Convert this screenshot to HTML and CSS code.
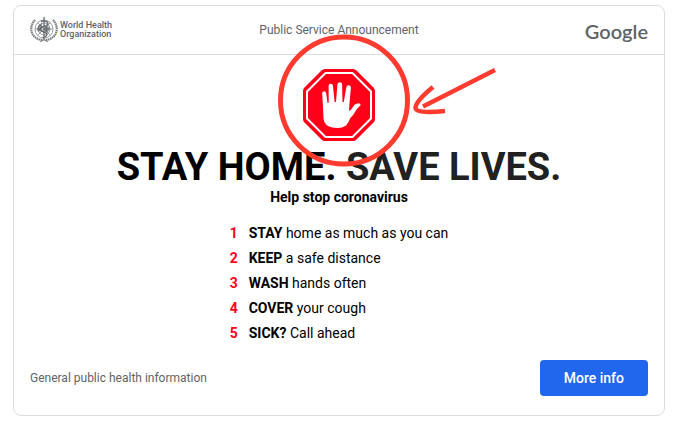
FILE: index.html
```html
<!DOCTYPE html>
<html lang="en">
<head>
<meta charset="utf-8">
<title>Public Service Announcement</title>
<link rel="stylesheet" href="styles.css">
</head>
<body>
<main class="card">
  <header class="header">
    <div class="who">
      <svg class="emblem" viewBox="0 0 28 26" aria-hidden="true">
        <g fill="none" stroke="#5f6368">
          <g stroke-width=".6">
            <circle cx="14" cy="12" r="9"/>
            <circle cx="14" cy="12" r="6"/>
            <circle cx="14" cy="12" r="3"/>
            <path d="M5 12h18M7.600 5.600l12.800 12.800M20.400 5.600L7.600 18.400"/>
          </g>
          <path stroke-width="2.200" stroke-dasharray="1.600 .5" opacity=".8" d="M5 3C0 8 0 16 5 20c2 2 5 3 8 3M23 3c5 5 5 13 0 17-2 2-5 3-8 3"/>
          <path stroke-width="1" opacity=".7" d="M10 25l4-2 4 2"/>
          <path stroke-width="1.200" d="M14 0v23"/>
          <path stroke-width="1.200" d="M11 5c2-2 7-1 7 1.500S10 9.500 10 12.500s7 2 7 5-4 2-4 4"/>
        </g>
        <path fill="#5f6368" opacity=".75" d="M8 9l4-3v5l-3 4-2-2zM15 10l3-1 2 3-3 4-2-2z"/>
      </svg>
      <span class="who-name">World Health<br>Organization</span>
    </div>
    <p class="label">Public Service Announcement</p>
    <span class="google">Google</span>
  </header>

  <section class="content">
    <div class="sign">
      <svg class="stop" viewBox="0 0 72 72" role="img" aria-label="Stop hand">
        <path fill="#ff0018" d="M22 0h28q2 0 3.500 1.500l17 17Q72 20 72 22v28q0 2-1.500 3.500l-17 17Q52 72 50 72H22q-2 0-3.500-1.500l-17-17Q0 52 0 50V22q0-2 1.500-3.500l17-17Q20 0 22 0z"/>
        <path fill="none" stroke="#fff" stroke-width="2" d="M22.500 4h27L68 22.500v27L49.500 68h-27L4 49.500v-27z"/>
        <path fill="#fff" d="M20 38L19.200 24.500q0-2 1.600-2.200 2-.2 2.400 2L24.500 34l1.200-.2L25.600 17q0-2.200 2-2.300 2.200 0 2.400 2.200L31.600 33H33l1.400-17q.2-2.800 2.300-2.800 2.400 0 2.400 2.800L39.500 33h1.300l2.500-14.500q.4-2.500 2.600-2.200 2.200.3 2 2.800L46.500 34 46 42l2.200-1.600 3.300-4.600q1.800-1.500 4.400-1.500 2.300.3 1.600 2-.3.800-1.700 1.600-2.200 1.700-3.500 4.700-2 4-5 6.400-1.800 5-4.300 7.500Q39.500 59 34.500 59q-7 0-11-3-2.700-2-3-6.500z"/>
      </svg>
      <svg class="markup" viewBox="0 0 230 150" aria-hidden="true">
        <g fill="none" stroke="#ff3b30" stroke-width="5">
          <ellipse cx="71" cy="71.500" rx="63.500" ry="63.500"/>
          <path stroke-width="4.500" d="M222 41L150 77.500M160 58Q143 72 142.500 78.500 142 85 172 82"/>
        </g>
      </svg>
    </div>
    <h1 class="title">STAY HOME. <span class="lives">SAVE LIVES.</span></h1>
    <p class="subtitle">Help stop coronavirus</p>
    <ol class="steps">
      <li><b>STAY</b> home as much as you can</li>
      <li><b>KEEP</b> a safe distance</li>
      <li><b>WASH</b> hands often</li>
      <li><b>COVER</b> your cough</li>
      <li><b>SICK?</b> Call ahead</li>
    </ol>
  </section>

  <footer class="footer">
    <p class="note">General public health information</p>
    <button class="more" type="button">More info</button>
  </footer>
</main>
</body>
</html>
```
FILE: styles.css
```css
* {
  box-sizing: border-box;
}

body {
  margin: 5px 10px 7px 13px;
  background: #fff;
  color: #000;
  font-family: Roboto, "Liberation Sans", sans-serif;
}

p,
h1 {
  margin: 0;
}

.card {
  border: 1px solid #dadce0;
  border-radius: 8px;
}

.header {
  display: grid;
  grid-template-columns: 1fr auto 1fr;
  align-items: center;
  height: 49px;
  padding: 0 16px;
  border-bottom: 1px solid #dadce0;
  color: #5f6368;
}

.who {
  display: flex;
  align-items: center;
  gap: 2px;
}

.emblem {
  width: 28px;
  height: 26px;
}

.who-name {
  font: 500 9px/9px Roboto, sans-serif;
}

.label {
  font-size: 12px;
}

.google {
  justify-self: end;
  padding-top: 2px;
  font: 600 20px/24px Lato, sans-serif;
}

.content {
  display: flex;
  flex-direction: column;
  align-items: center;
  padding-top: 14px;
}

.sign {
  position: relative;
}

.stop {
  display: block;
  width: 72px;
  height: 72px;
}

.markup {
  position: absolute;
  left: -30px;
  top: -40px;
  z-index: 1;
  width: 230px;
  height: 150px;
  pointer-events: none;
}

.title {
  margin-top: 4px;
  font-size: 38px;
  line-height: 44px;
}

.lives {
  color: #212121;
}

.subtitle {
  font-size: 14px;
  font-weight: 700;
  line-height: 16px;
}

.steps {
  display: grid;
  margin: 16px 0 0;
  padding: 0;
  list-style: none;
  counter-reset: step;
  font-size: 14px;
  line-height: 25px;
}

.steps li {
  counter-increment: step;
}

.steps li::before {
  content: counter(step);
  display: inline-block;
  width: 19px;
  color: #ff0018;
  font-weight: 700;
}

.footer {
  display: flex;
  align-items: center;
  justify-content: space-between;
  padding: 14px 16px 19px;
}

.note {
  color: #5f6368;
  font-size: 12px;
}

.more {
  height: 36px;
  padding: 0 24px;
  border: 0;
  border-radius: 4px;
  background: #2067ed;
  color: #fff;
  font: 500 14px/36px Roboto, sans-serif;
}
```
